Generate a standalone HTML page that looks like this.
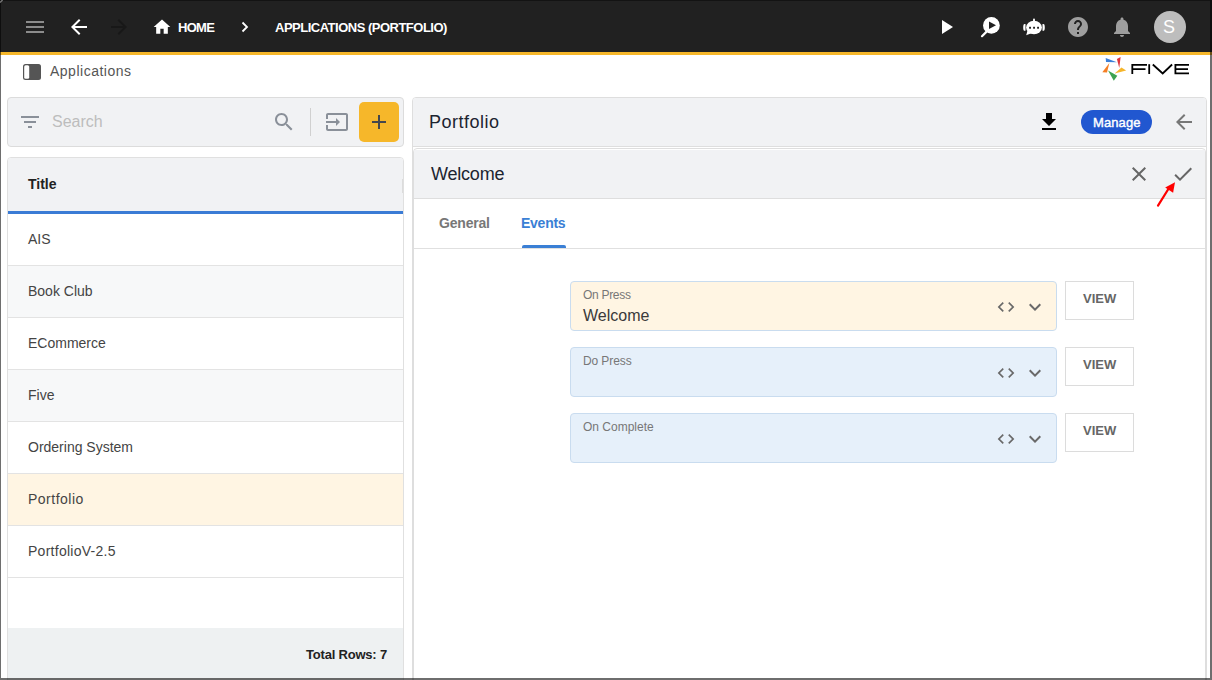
<!DOCTYPE html>
<html><head><meta charset="utf-8">
<style>
*{box-sizing:border-box;margin:0;padding:0}
html,body{width:1212px;height:680px;overflow:hidden;background:#fff;font-family:"Liberation Sans",sans-serif}
.a{position:absolute}
svg{display:block;position:absolute}
.t{position:absolute;white-space:nowrap;line-height:1}
#frameL{left:0;top:0;width:1px;height:680px;background:rgba(0,0,0,0.57);z-index:50}
#frameT{left:1px;top:0;width:1209px;height:1px;background:rgba(0,0,0,0.4);z-index:50}
#frameR{left:1210px;top:0;width:2px;height:678px;background:rgba(0,0,0,0.57);z-index:50}
#frameB{left:1px;top:678px;width:1211px;height:2px;background:rgba(0,0,0,0.57);z-index:50}
#bar{left:0;top:0;width:1212px;height:52px;background:#212121}
#ybar{left:0;top:52px;width:1212px;height:3px;background:#f6b72a}
.row{position:absolute;left:8px;width:395px;height:52px;border-bottom:1px solid #e3e3e3}
.row .t{left:20px;top:18px;font-size:14px;color:#444}
.fld{position:absolute;left:570px;width:487px;height:50px;border:1px solid #c9dcef;border-radius:4px;background:#e6f0fa}
.fld .lbl{position:absolute;left:12px;top:7px;font-size:12px;letter-spacing:-0.3px;color:#777;line-height:1;white-space:nowrap}
.view{position:absolute;left:1065px;width:69px;height:39px;border:1px solid #dcdcdc;background:#fff}
.view .t{left:17px;top:10px;font-size:13px;font-weight:bold;color:#666}
</style></head><body>
<div class="a" id="bar"></div>
<div class="a" id="ybar"></div>

<!-- toolbar left -->
<svg style="left:23px;top:15px" width="24" height="24" viewBox="0 0 24 24"><path fill="#8c8c8c" d="M3 18h18v-2H3v2zm0-5h18v-2H3v2zm0-7v2h18V6H3z"/></svg>
<svg style="left:67px;top:15px" width="24" height="24" viewBox="0 0 24 24"><path fill="#fff" d="M20 11H7.830l5.59-5.59L12 4l-8 8 8 8 1.41-1.41L7.83 13H20v-2z"/></svg>
<svg style="left:107px;top:15px" width="24" height="24" viewBox="0 0 24 24"><path fill="#181818" d="M12 4l-1.41 1.410L16.17 11H4v2h12.17l-5.58 5.59L12 20l8-8z"/></svg>
<svg style="left:152px;top:17px" width="20" height="20" viewBox="0 0 24 24"><path fill="#fff" d="M10 20v-6h4v6h5v-8h3L12 3 2 12h3v8z"/></svg>
<div class="t" style="left:178px;top:21px;font-size:13px;font-weight:bold;color:#fff;letter-spacing:-0.7px">HOME</div>
<svg style="left:236px;top:15px" width="20" height="24" viewBox="0 0 20 24"><path fill="none" stroke="#fff" stroke-width="1.8" d="M6.5 7.5l4.5 4.5-4.5 4.5"/></svg>
<div class="t" style="left:275px;top:21px;font-size:13px;font-weight:bold;color:#fff;letter-spacing:-0.5px">APPLICATIONS (PORTFOLIO)</div>

<!-- toolbar right -->
<svg style="left:934px;top:15px" width="24" height="24" viewBox="0 0 24 24"><path fill="#fff" d="M8 5v14l11-7z"/></svg>
<svg style="left:978px;top:15px" width="24" height="24" viewBox="0 0 24 24">
  <circle cx="13.4" cy="10.4" r="8.4" fill="#fff"/>
  <path d="M11 6.5v7.6l7-3.8z" fill="#212121"/>
  <path d="M4 21.2l4.6-4.6" stroke="#fff" stroke-width="2.2" stroke-linecap="round"/>
</svg>
<svg style="left:1022px;top:15px" width="24" height="24" viewBox="0 0 24 24">
  <rect x="11" y="3.6" width="2" height="3" rx="1" fill="#fff"/>
  <ellipse cx="12" cy="12.5" rx="7.9" ry="6.8" fill="#fff"/>
  <path d="M5.5 15.5L4.2 20.2 10 18z" fill="#fff"/>
  <path d="M2.6 9.1h0.9v6.7H2.6a1.4 3.35 0 0 1 0-6.7z" fill="#fff"/>
  <path d="M21.4 9.1h-0.9v6.7h0.9a1.4 3.35 0 0 0 0-6.7z" fill="#fff"/>
  <rect x="7.1" y="11.8" width="1.9" height="1.9" fill="#212121"/>
  <rect x="11.1" y="11.8" width="1.9" height="1.9" fill="#212121"/>
  <rect x="15.1" y="11.8" width="1.9" height="1.9" fill="#212121"/>
</svg>
<svg style="left:1066px;top:15px" width="24" height="24" viewBox="0 0 24 24"><path fill="#9e9e9e" d="M12 2C6.48 2 2 6.48 2 12s4.48 10 10 10 10-4.48 10-10S17.520 2 12 2zm1 17h-2v-2h2v2zm2.07-7.75l-.9.92C13.45 12.9 13 13.5 13 15h-2v-.5c0-1.1.45-2.1 1.17-2.83l1.24-1.26c.37-.36.59-.86.59-1.41 0-1.1-.9-2-2-2s-2 .9-2 2H8c0-2.21 1.79-4 4-4s4 1.79 4 4c0 .88-.36 1.68-.93 2.250z"/></svg>
<svg style="left:1110px;top:15px" width="24" height="24" viewBox="0 0 24 24"><path fill="#9e9e9e" d="M12 22c1.1 0 2-.9 2-2h-4c0 1.1.89 2 2 2zm6-6v-5c0-3.07-1.64-5.64-4.5-6.32V4c0-.83-.67-1.5-1.5-1.5s-1.5.67-1.5 1.5v.68C7.63 5.36 6 7.92 6 11v5l-2 2v1h16v-1l-2-2z"/></svg>
<div class="a" style="left:1154px;top:11px;width:32px;height:32px;border-radius:50%;background:#bdbdbd"></div>
<div class="t" style="left:1163px;top:18px;font-size:18px;color:#fff">S</div>

<!-- second line -->
<svg style="left:22px;top:63px" width="20" height="18" viewBox="0 0 20 18">
  <rect x="1" y="1" width="18" height="16" rx="2.5" fill="#555"/>
  <rect x="2.2" y="2.2" width="5" height="13.6" rx="1.5" fill="#fff"/>
</svg>
<div class="t" style="left:50px;top:64px;font-size:14px;color:#555;letter-spacing:0.5px">Applications</div>

<!-- FIVE logo -->
<svg style="left:1100px;top:55px" width="92" height="28" viewBox="0 0 92 28">
  <path d="M5.7 2.9L6 7.1 16.9 7.3z" fill="#3b7fd8"/>
  <path d="M16.9 4L20.6 2.1 19.3 13.1z" fill="#e0353b"/>
  <path d="M21.5 12.6L26.2 15.4 14.6 18.6z" fill="#f6b52a"/>
  <path d="M8 15.4L17.3 20.8 13.8 25.8z" fill="#3ea350"/>
  <path d="M9.4 8.1L2.3 17.2 7 17.6z" fill="#f57f25"/>
  <g fill="none" stroke="#000" stroke-width="1.8">
    <path d="M47 9.9H32.3v9.1M32.3 14.2H45.5"/>
    <path d="M49.2 9.2v9.8"/>
    <path d="M52.8 9.5L62.7 18.5 72.1 9.5"/>
    <path d="M89 9.9H75.4v8.4H89M75.4 14.1H88"/>
  </g>
</svg>

<!-- left panel: search -->
<div class="a" style="left:7px;top:97px;width:397px;height:50px;border:1px solid #dcdcdc;border-radius:4px;background:#f1f2f4"></div>
<svg style="left:18px;top:110px" width="24" height="24" viewBox="0 0 24 24"><path fill="#8a9099" d="M10 18h4v-2h-4v2zM3 6v2h18V6H3zm3 7h12v-2H6v2z"/></svg>
<div class="t" style="left:52px;top:114px;font-size:16px;color:#bdbdbd">Search</div>
<svg style="left:272px;top:110px" width="24" height="24" viewBox="0 0 24 24"><path fill="#8a9099" d="M15.5 14h-.79l-.28-.27C15.41 12.59 16 11.11 16 9.5 16 5.91 13.09 3 9.5 3S3 5.91 3 9.5 5.91 16 9.5 16c1.61 0 3.09-.59 4.23-1.57l.27.28v.79l5 4.99L20.49 19l-4.99-5zm-6 0C7.01 14 5 11.99 5 9.5S7.01 5 9.5 5 14 7.01 14 9.5 11.99 14 9.5 14z"/></svg>
<div class="a" style="left:310px;top:108px;width:1px;height:28px;background:#d0d0d0"></div>
<svg style="left:325px;top:110px" width="24" height="24" viewBox="0 0 24 24"><path fill="#8a9099" d="M21 3.01H3c-1.1 0-2 .9-2 2V9h2V4.99h18v14.03H3V15H1v4.01c0 1.1.9 1.98 2 1.98h18c1.1 0 2-.88 2-1.98v-14c0-1.11-.9-2-2-2zM11 16l4-4-4-4v3H1v2h10v3z"/></svg>
<div class="a" style="left:359px;top:102px;width:40px;height:40px;border-radius:5px;background:#f6b72a"></div>
<svg style="left:367px;top:110px" width="24" height="24" viewBox="0 0 24 24"><path fill="#44474d" d="M19 13h-6v6h-2v-6H5v-2h6V5h2v6h6v2z"/></svg>

<!-- left panel: table -->
<div class="a" style="left:7px;top:157px;width:397px;height:530px;border:1px solid #e0e0e0;border-radius:4px;background:#fff;overflow:hidden">
  <div class="a" style="left:0;top:0;width:395px;height:54px;background:#f1f2f4"></div>
  <div class="a" style="left:394px;top:21px;width:2px;height:14px;background:#dcdcdc"></div>
  <div class="a" style="left:0;top:53px;width:395px;height:3px;background:#3a7bd5"></div>
  <div class="t" style="left:20px;top:19px;font-size:14px;font-weight:bold;color:#222">Title</div>
</div>
<div class="row" style="top:214px;background:#fff"><div class="t">AIS</div></div>
<div class="row" style="top:266px;background:#f7f8f9"><div class="t">Book Club</div></div>
<div class="row" style="top:318px;background:#fff"><div class="t">ECommerce</div></div>
<div class="row" style="top:370px;background:#f7f8f9"><div class="t">Five</div></div>
<div class="row" style="top:422px;background:#fff"><div class="t">Ordering System</div></div>
<div class="row" style="top:474px;background:#fff5e3"><div class="t" style="letter-spacing:0.5px">Portfolio</div></div>
<div class="row" style="top:526px;background:#fff"><div class="t" style="letter-spacing:0.27px">PortfolioV-2.5</div></div>
<div class="a" style="left:8px;top:628px;width:395px;height:52px;background:#eef1f2"></div>
<div class="t" style="left:306px;top:648px;font-size:13px;font-weight:bold;color:#222;letter-spacing:-0.2px">Total Rows: 7</div>

<!-- right panel -->
<div class="a" style="left:412px;top:97px;width:795px;height:600px;border:1px solid #dedede;border-radius:4px;background:#fff;overflow:hidden">
  <div class="a" style="left:0;top:0;width:793px;height:49px;background:#f1f2f4;border-bottom:1px solid #dedede"></div>
</div>
<div class="t" style="left:429px;top:113px;font-size:18px;color:#1c2430;letter-spacing:0.5px">Portfolio</div>
<svg style="left:1037px;top:110px" width="24" height="24" viewBox="0 0 24 24"><path fill="#000" d="M19 9h-4V3H9v6H5l7 7 7-7zM5 18v2h14v-2H5z"/></svg>
<div class="a" style="left:1081px;top:110px;width:71px;height:24px;border-radius:12px;background:#2157d0"></div>
<div class="t" style="left:1093px;top:116px;font-size:13px;color:#fff;-webkit-text-stroke:0.4px #fff;letter-spacing:0.1px">Manage</div>
<svg style="left:1172px;top:110px" width="24" height="24" viewBox="0 0 24 24"><path fill="#777" d="M20 11H7.83l5.59-5.59L12 4l-8 8 8 8 1.41-1.41L7.83 13H20v-2z"/></svg>

<div class="a" style="left:413px;top:148px;width:793px;height:600px;border:1px solid #dedede;border-radius:4px;background:#fff;overflow:hidden;box-shadow:inset 0 1px 0 #fff">
  <div class="a" style="left:0;top:1px;width:791px;height:49px;background:#f1f2f4;border-bottom:1px solid #dedede"></div>
  <div class="a" style="left:0;top:99px;width:793px;height:1px;background:#e0e0e0"></div>
</div>
<div class="t" style="left:431px;top:165px;font-size:18px;color:#1c2430;letter-spacing:-0.2px">Welcome</div>
<svg style="left:1127px;top:162px" width="24" height="24" viewBox="0 0 24 24"><path fill="#666" d="M19 6.41L17.59 5 12 10.59 6.41 5 5 6.41 10.59 12 5 17.59 6.41 19 12 13.41 17.59 19 19 17.59 13.41 12z"/></svg>
<svg style="left:1171px;top:162px" width="24" height="24" viewBox="0 0 24 24"><path fill="#666" d="M9 16.17L4.83 12l-1.42 1.41L9 19 21 7l-1.41-1.41z"/></svg>

<div class="t" style="left:439px;top:216px;font-size:14px;font-weight:bold;color:#777;letter-spacing:-0.2px">General</div>
<div class="t" style="left:521px;top:216px;font-size:14px;font-weight:bold;color:#3a7fd5;letter-spacing:-0.25px">Events</div>
<div class="a" style="left:522px;top:245px;width:44px;height:3px;border-radius:2px 2px 0 0;background:#3a7fd5"></div>

<!-- fields -->
<div class="fld" style="top:281px;background:#fff5e3"><div class="lbl">On Press</div><svg style="left:425px;top:15px" width="20" height="20" viewBox="0 0 24 24"><path fill="#696969" d="M9.4 16.6L4.8 12l4.6-4.6L8 6l-6 6 6 6 1.4-1.4zm5.2 0l4.6-4.6-4.6-4.6L16 6l6 6-6 6-1.4-1.4z"/></svg>
  <svg style="left:452px;top:13px" width="24" height="24" viewBox="0 0 24 24"><path fill="#696969" d="M16.59 8.59L12 13.17 7.41 8.59 6 10l6 6 6-6z"/></svg>
  <div class="t" style="left:12px;top:26px;font-size:16px;color:#3a3a3a">Welcome</div></div>
<div class="fld" style="top:347px"><div class="lbl" style="letter-spacing:-0.1px">Do Press</div><svg style="left:425px;top:15px" width="20" height="20" viewBox="0 0 24 24"><path fill="#696969" d="M9.4 16.6L4.8 12l4.6-4.6L8 6l-6 6 6 6 1.4-1.4zm5.2 0l4.6-4.6-4.6-4.6L16 6l6 6-6 6-1.4-1.4z"/></svg>
  <svg style="left:452px;top:13px" width="24" height="24" viewBox="0 0 24 24"><path fill="#696969" d="M16.59 8.59L12 13.17 7.41 8.59 6 10l6 6 6-6z"/></svg></div>
<div class="fld" style="top:413px"><div class="lbl" style="letter-spacing:0">On Complete</div><svg style="left:425px;top:15px" width="20" height="20" viewBox="0 0 24 24"><path fill="#696969" d="M9.4 16.6L4.8 12l4.6-4.6L8 6l-6 6 6 6 1.4-1.4zm5.2 0l4.6-4.6-4.6-4.6L16 6l6 6-6 6-1.4-1.4z"/></svg>
  <svg style="left:452px;top:13px" width="24" height="24" viewBox="0 0 24 24"><path fill="#696969" d="M16.59 8.59L12 13.17 7.41 8.59 6 10l6 6 6-6z"/></svg></div>

<div class="view" style="top:281px"><div class="t">VIEW</div></div>
<div class="view" style="top:347px"><div class="t">VIEW</div></div>
<div class="view" style="top:413px"><div class="t">VIEW</div></div>

<!-- red arrow -->
<svg style="left:1150px;top:175px" width="35" height="35" viewBox="0 0 35 35">
  <path d="M8 30.6L19 13" stroke="#f00" stroke-width="2.2" stroke-linecap="round"/>
  <path d="M15.2 12.5L25 7.2 23.1 17.8z" fill="#f00"/>
</svg>

<div class="a" id="frameL"></div>
<div class="a" id="frameT"></div>
<svg style="left:0;top:0;z-index:51" width="4" height="4" viewBox="0 0 4 4"><path d="M0 2.6L2.6 0" stroke="#777" stroke-width="1.4"/></svg>
<div class="a" id="frameR"></div>
<div class="a" id="frameB"></div>
</body></html>
